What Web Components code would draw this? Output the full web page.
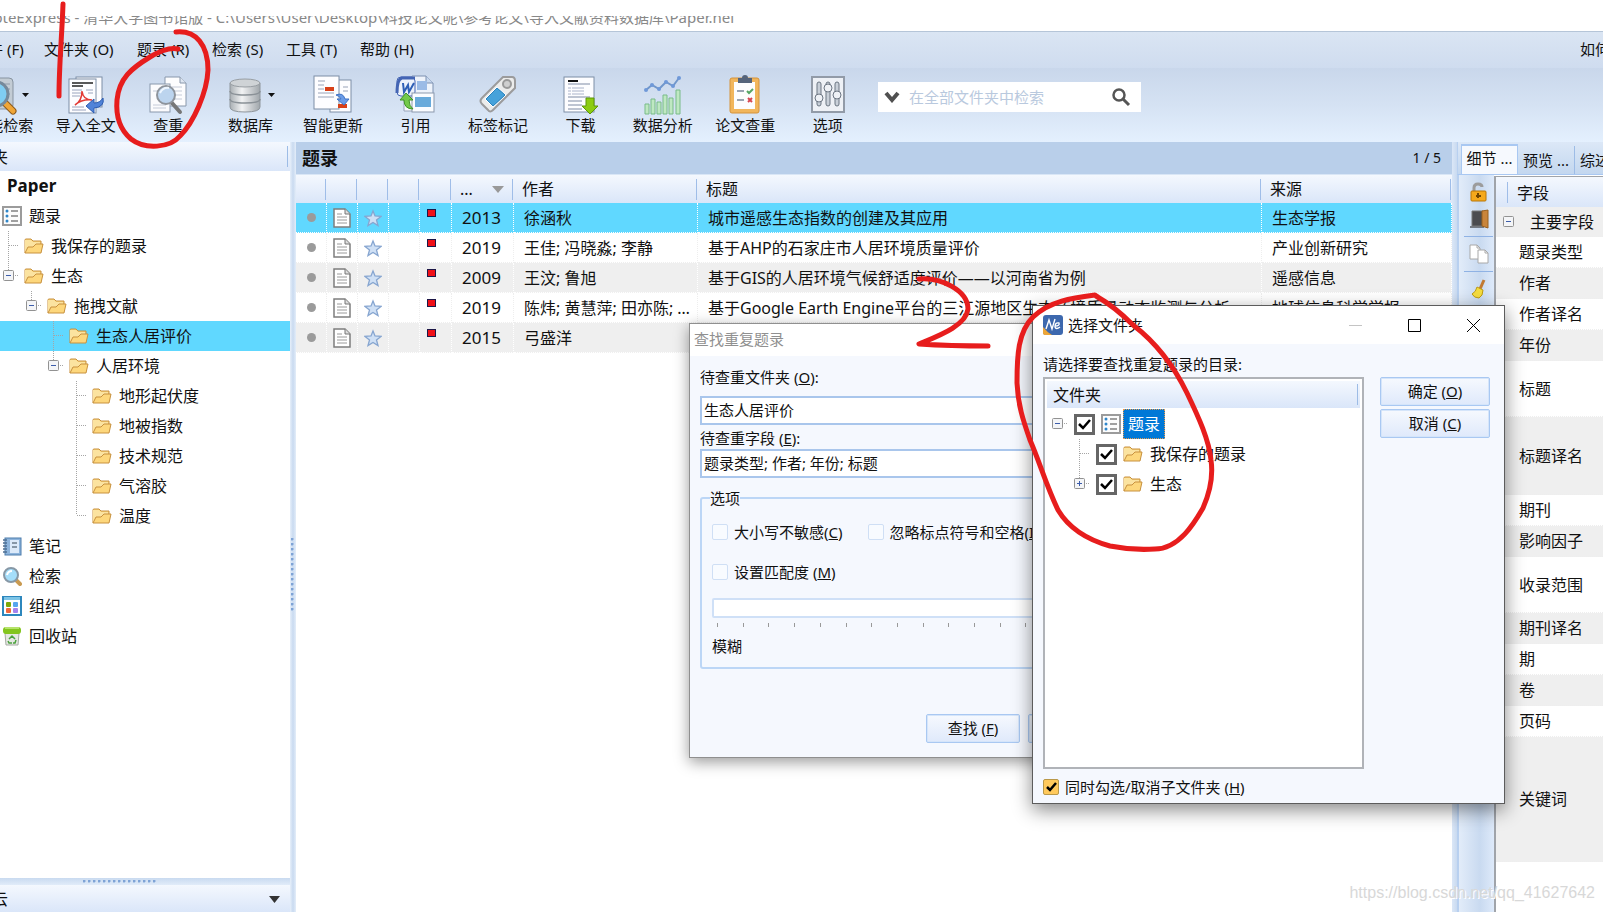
<!DOCTYPE html>
<html lang="zh-CN">
<head>
<meta charset="utf-8">
<title>NoteExpress</title>
<style>
html,body{margin:0;height:100%;overflow:hidden}
body{font-family:"Noto Sans","Noto Sans CJK SC",sans-serif;font-size:16px;line-height:20px;color:#111;background:#fff}
</style>
</head>
<body>
<ref-app>
  <title-bar slot="top">NoteExpress - 清华大学图书馆版 - C:\Users\User\Desktop\科技论文呢\参考论文\导入文献资料数据库\Paper.nel</title-bar>
  <menu-bar slot="top"></menu-bar>
  <tool-bar slot="top">
    <tool-item icon="find" menu>智能检索</tool-item>
    <tool-item icon="import">导入全文</tool-item>
    <tool-item icon="dup">查重</tool-item>
    <tool-item icon="db" menu>数据库</tool-item>
    <tool-item icon="update">智能更新</tool-item>
    <tool-item icon="cite">引用</tool-item>
    <tool-item icon="tag">标签标记</tool-item>
    <tool-item icon="download">下载</tool-item>
    <tool-item icon="chart">数据分析</tool-item>
    <tool-item icon="paper">论文查重</tool-item>
    <tool-item icon="options">选项</tool-item>
  </tool-bar>
  <folder-pane slot="side">
    <tree-row bold>Paper</tree-row>
    <tree-row icon="list">题录</tree-row>
    <tree-row level="1" line="full" icon="folder">我保存的题录</tree-row>
    <tree-row level="1" box="minus" icon="folder">生态</tree-row>
    <tree-row level="2" box="minus" icon="folder">拖拽文献</tree-row>
    <tree-row level="3" line="full" icon="folder" current>生态人居评价</tree-row>
    <tree-row level="3" box="minus" icon="folder">人居环境</tree-row>
    <tree-row level="4" line="full" icon="folder">地形起伏度</tree-row>
    <tree-row level="4" line="full" icon="folder">地被指数</tree-row>
    <tree-row level="4" line="full" icon="folder">技术规范</tree-row>
    <tree-row level="4" line="full" icon="folder">气溶胶</tree-row>
    <tree-row level="4" line="half" icon="folder">温度</tree-row>
    <tree-row icon="note">笔记</tree-row>
    <tree-row icon="lens">检索</tree-row>
    <tree-row icon="org">组织</tree-row>
    <tree-row icon="bin">回收站</tree-row>
  </folder-pane>
  <record-list slot="main"></record-list>
  <detail-pane slot="detail"></detail-pane>
</ref-app>
<duplicate-dialog></duplicate-dialog>
<folder-dialog></folder-dialog>
<ink-marks></ink-marks>
<water-mark>https://blog.csdn.net/qq_41627642</water-mark>

<script>
const page = (x,y,w,h,f='#fdfdff') => `<rect x="${x}" y="${y}" width="${w}" height="${h}" fill="${f}" stroke="#7d8ea6"/>`;
const ICONS = {
find:[40,`<rect x="14" y="3" width="22" height="31" rx="4" fill="#c3ccd4" stroke="#8793a0"/><path d="M26 9h7M28 14h5M28 19h5" stroke="#8e9aa8"/><path d="M27 27l9 9" stroke="#8c5a1c" stroke-width="7" stroke-linecap="round"/><path d="M28 28l8 8" stroke="#f0a637" stroke-width="5" stroke-linecap="round"/><circle cx="19" cy="19" r="12" fill="#7fcdf2" stroke="#75899a" stroke-width="3"/><path d="M11 18q4-8 12-7" stroke="#d8f2ff" stroke-width="3" fill="none"/>`],
import:[40,`${page(10,2,26,30)}${page(3,4,27,34)}<path d="M6 8h21M6 11h11" stroke="#222" stroke-width="1.500"/><path d="M6 15h10M6 18h9M6 21h8M20 15h7M22 18h5M6 32h12M6 35h14" stroke="#9aa4bd"/><path d="M9 30q7-4 7-14q1 9 10 9q-10-1-17 5z" fill="none" stroke="#e23b35" stroke-width="1.500"/><path d="M37 23q2 9-9 10v5l-8-7 8-7v4q6 0 9-5z" fill="#5083d8" stroke="#2c5cb0"/>`],
dup:[40,`<path d="M17 2h15l6 6v23H17z" fill="#fdfdfe" stroke="#8897ab"/><path d="M32 2v6h6" fill="#dfe7f2" stroke="#8897ab"/><path d="M20 12h14M20 16h14M20 20h14M20 24h14" stroke="#c5cbd8"/><rect x="2" y="9" width="20" height="28" fill="#fbfbfd" stroke="#8897ab"/><path d="M5 16h5M5 30h13M5 33h13" stroke="#c5cbd8"/><path d="M24 28l8 9" stroke="#777" stroke-width="4" stroke-linecap="round"/><circle cx="18" cy="20" r="9" fill="#bcd4ee" stroke="#8e949c" stroke-width="2"/><path d="M12 18q3-6 9-5" stroke="#eef6ff" stroke-width="2" fill="none"/>`],
db:[36,`<defs><linearGradient id="m"><stop offset="0" stop-color="#a9afb3"/><stop offset=".4" stop-color="#f2f3f4"/><stop offset="1" stop-color="#a0a6ab"/></linearGradient></defs><path d="M3 6v24q0 5 15 5t15-5V6z" fill="url(#m)" stroke="#8f969c"/><ellipse cx="18" cy="6" rx="15" ry="4" fill="#cfd3d6" stroke="#979da2"/><path d="M3 14q0 4 15 4t15-4M3 22q0 4 15 4t15-4" fill="none" stroke="#8a9197" stroke-width="1.500"/>`],
update:[40,`${page(17,5,21,32)}${page(1,1,25,33)}<path d="M5 6h7M5 10h6M5 14h6M5 18h16M5 22h16M30 12h5M30 16h5" stroke="#99a3b8"/><rect x="12" y="12" width="9" height="4" fill="#d84018"/><rect x="25" y="29" width="9" height="4" fill="#d84018"/><path d="M23 20q7-3 9 4h4l-5 6-7-6h4q-1-3-5-4z" fill="#6a9be8" stroke="#3f73c4"/>`],
cite:[40,`<path d="M17 1h14l7 7v18H17z" fill="#eef3fb" stroke="#7d90b0"/><path d="M31 1v7h7" fill="#c7d8ef" stroke="#7d90b0"/><rect x="22" y="6" width="10" height="9" fill="#9bbbe6"/><rect x="2" y="2" width="18" height="19" rx="4" fill="#edf2fb" stroke="#4465b4"/><path d="M20 3H7Q2 4 2 18" stroke="#4465b4" stroke-width="3" fill="none"/><path d="M8 8l1 9 4-7 1 7 5-9" fill="none" stroke="#2e5fb6" stroke-width="2"/><path d="M9 22v14h10V22z" fill="#f7f9fc" stroke="#98a5ba"/><rect x="17" y="18" width="22" height="19" fill="#fafcff" stroke="#8b99ad"/><rect x="20" y="22" width="16" height="10" fill="#68aadb"/><path d="M5 25l6-7 7 7h-4q0 6 4 9-9 0-9-9z" fill="#73c94b" stroke="#3f9425"/>`],
tag:[40,`<path d="M25 2h9q3 0 3 4v7L15 35q-3 3-5 0l-6-6q-3-3 0-6z" fill="#ececeb" stroke="#9b9b9c" stroke-width="2"/><circle cx="29" cy="9" r="4" fill="#cfcfcf" stroke="#9a9a9a" stroke-width="2"/><path d="M19 12l9 8-13 12-8-8z" fill="#46a2da" stroke="#fff"/><path d="M19 13l8 7-12 11-7-7z" fill="none" stroke="#2c83bd"/>`],
download:[40,`${page(4,2,30,35)}<path d="M8 6h10" stroke="#111" stroke-width="2"/><path d="M8 9h22M8 22h22M8 26h14M8 30h14M8 34h14" stroke="#7f8ba5"/><path d="M8 13h16M8 16h16M8 19h16" stroke="#aab3ca" stroke-dasharray="3 1 12 9"/><path d="M26 23h8v8h4l-8 8-8-8h4z" fill="#8ccc11" stroke="#5d9608"/>`],
chart:[40,`<path d="M3 15l6-5 7 4 7-7 7 4 6-8" fill="none" stroke="#7197cb" stroke-width="2"/><g fill="#6f99d8"><circle cx="3" cy="15" r="2"/><circle cx="9" cy="10" r="2"/><circle cx="16" cy="14" r="2"/><circle cx="23" cy="7" r="2"/><circle cx="30" cy="11" r="2"/><circle cx="36" cy="3" r="2"/></g><g fill="#bfe8c2" stroke="#79bb88"><path d="M2 29h4v10H2zM8 24h4v15H8zM14 27h4v12h-4zM20 20h4v19h-4zM26 23h4v16h-4zM33 15h4v24h-4z"/></g>`],
paper:[40,`<rect x="5" y="3" width="29" height="35" rx="2" fill="#f1b65c" stroke="#d5933a"/><rect x="9" y="7" width="21" height="27" fill="#fdfdfd"/><path d="M13 3h4q0-3 3-3t3 3h4v5H13z" fill="#55647a"/><path d="M12 16h7M12 25h7" stroke="#9aa4b2" stroke-width="2"/><path d="M22 16l2 2 4-4" stroke="#55a563" stroke-width="2" fill="none"/><path d="M23 23l4 4M27 23l-4 4" stroke="#d64550" stroke-width="2"/>`],
options:[40,`<rect x="4" y="2" width="32" height="35" fill="#eef1f6" stroke="#929ba8" stroke-width="2"/><g fill="#c9d0d9" stroke="#6c7683"><rect x="9" y="7" width="4" height="24" rx="2"/><rect x="18" y="7" width="4" height="24" rx="2"/><rect x="27" y="7" width="4" height="24" rx="2"/><circle cx="11" cy="23" r="4" fill="#eef1f6"/><circle cx="20" cy="13" r="4" fill="#eef1f6"/><circle cx="29" cy="20" r="4" fill="#eef1f6"/></g>`],
folder:[20,`<path d="M1 17V4q0-1 1-1h5l2 2h8v3" fill="#f8d37b" stroke="#c8913e"/><path d="M1 17V4h6l2 2h7v3h-4l-2 3H5z" fill="#fbe3a0"/><path d="M1 17l3-6h5l3-3h7l-2 9z" fill="#fdd77c" stroke="#c8913e"/>`],
list:[20,`<rect x="1" y="1" width="18" height="18" fill="#fcfcfc" stroke="#9b9b9b" stroke-width="2"/><g fill="#2f86c9"><circle cx="5" cy="5" r="1.5"/><circle cx="5" cy="10" r="1.5"/><circle cx="5" cy="15" r="1.5"/></g><path d="M9 5h7M9 10h7M9 15h7" stroke="#444"/>`],
note:[20,`<rect x="3" y="2" width="16" height="17" fill="#8db4dc" stroke="#4d7cac"/><rect x="8" y="4" width="9" height="13" fill="#dceafa"/><path d="M10 7h5M10 11h5" stroke="#345" stroke-width="1"/><path d="M1 4h4M1 7h4M1 10h4M1 13h4M1 16h4" stroke="#4d6f92" stroke-width="1.5"/>`],
lens:[20,`<path d="M14 14l4 4" stroke="#c99a51" stroke-width="4" stroke-linecap="round"/><circle cx="9" cy="9" r="7" fill="#a5defa" stroke="#8798a6" stroke-width="2"/><path d="M5 9q1-4 5-4" stroke="#fff" stroke-width="2" fill="none"/>`],
org:[20,`<rect x="1" y="1" width="18" height="18" fill="#fdfeff" stroke="#2d87bd" stroke-width="2"/><rect x="2" y="1" width="16" height="3" fill="#7dc4e6"/><rect x="4" y="6" width="5" height="5" rx="1" fill="#7ca90a"/><rect x="11" y="6" width="5" height="5" rx="1" fill="#55a5ee"/><rect x="4" y="12" width="5" height="5" rx="1" fill="#f0683c"/><rect x="11" y="12" width="5" height="5" rx="1" fill="#a583ee"/>`],
bin:[20,`<path d="M3 7h14l-1 12H4z" fill="#e5e8e3" stroke="#a6aba3"/><rect x="1" y="1" width="18" height="7" rx="3" fill="#83c51e"/><path d="M3 2h14" stroke="#b6e36a" stroke-width="2"/><path d="M7 13l3-3 3 3M6 15l1 2h3M14 14l-1 3h-2" fill="none" stroke="#4aa13c" stroke-width="1.5"/>`],
doc:[20,`<path d="M2 1h11l5 5v13H2z" fill="#fff" stroke="#7e7e7e" stroke-width="1.5"/><path d="M13 1v5h5" fill="#ddd" stroke="#777"/><path d="M5 6h5M5 9h10M5 12h10M5 15h10" stroke="#9a9a9a"/>`],
star:[18,`<path d="M9 2l2 5 6 .4-4.500 3.600 1.500 5.500L9 13.500 4 16.500 5.500 11 1 7.400 7 7z" fill="#cfe0f5" stroke="#86a5d0" stroke-width="1.300"/>`],
lock:[20,`<path d="M5 9V6q0-4 4-4t4 3" fill="none" stroke="#9c9c9c" stroke-width="3"/><rect x="2" y="9" width="15" height="10" rx="1" fill="#f5a91c" stroke="#b97607"/><path d="M9 11v5M7 14h5" stroke="#744700" stroke-width="2"/>`],
door:[20,`<path d="M1 18h14" stroke="#747b85" stroke-width="2"/><path d="M3 2h11v15H3z" fill="#4b4c50" stroke="#777"/><path d="M13 2l6-1v18l-6-2z" fill="#c9853c" stroke="#99601f"/>`],
copy:[20,`<path d="M1 1h7l3 3v11H1z" fill="#fff" stroke="#a8a8a8"/><path d="M9 6h7l3 3v10H9z" fill="#fff" stroke="#a8a8a8"/><path d="M16 6v3h3M8 1v3h3" fill="none" stroke="#a8a8a8"/>`],
broom:[20,`<path d="M15 1l-4 9" stroke="#c17a33" stroke-width="3"/><path d="M8 8l6 3q0 6-4 8-5 0-7-4 4-2 5-7z" fill="#f5dc3e" stroke="#bd9b13"/>`],
logo:[20,`<rect width="20" height="20" rx="3" fill="#3d68ae"/><path d="M0 12q4 5 9 8H2q-2 0-2-2z" fill="#eda638"/><path d="M3 14L6 5l3 9 3-10M12 11q5 0 4-3-4-1-4 4 1 3 5 0" stroke="#fff" fill="none" stroke-width="1.400"/>`]
};
const svg = (n,s) => { const [b,p]=ICONS[n]; return `<svg class="ic" width="${s||b}" height="${s||b}" viewBox="0 0 ${b} ${b}" aria-hidden="true">${p}</svg>`; };
const CONTROL = `:host,*{box-sizing:border-box}svg{display:block;flex:none}button{font:inherit;color:inherit;cursor:default}`;
const HEAD = `linear-gradient(#f4f8fe,#dae6f9)`;

function component(name, markup) {
  customElements.define(name, class extends HTMLElement {
    constructor() {
      super();
      this.attachShadow({mode:'open'}).innerHTML = `<style>${CONTROL}</style>` + (typeof markup === 'function' ? markup(this) : markup);
    }
  });
}

component('ref-app', `<style>
:host{display:flex;flex-direction:column;height:100vh;overflow:hidden}
main{flex:1;display:flex;min-height:0}
.split{width:6px;flex:none;display:flex;align-items:center;padding-top:96px;background:linear-gradient(90deg,#e6effa,#c9daf0,#e3edf9)}
.split i{width:3px;height:74px;margin:0 1px;background:radial-gradient(circle at 1px 1px,#7ea3d6 1px,#fff0 2px) 0 0/5px 5px}
.main{flex:1;min-width:0;display:flex}
</style><slot name="top"></slot><main><slot name="side"></slot><div class="split"><i></i></div><div class="main"><slot name="main"></slot></div><slot name="detail"></slot></main>`);

component('title-bar', `<style>
:host{display:block;padding-top:16px;height:31px;flex:none;background:#fff;color:#888;font-size:15px}
div{height:15px;overflow:hidden;white-space:nowrap;display:flex;align-items:flex-end}
span{display:block;margin-left:-18px;line-height:24px;margin-bottom:2px}
</style><div><span><slot></slot></span></div>`);

component('menu-bar', `<style>
:host{display:block;flex:none;background:linear-gradient(#dae5f3,#cfdcef);border-top:1px solid #b5c5d8}
nav{display:flex;justify-content:space-between;height:36px;padding-bottom:2px;align-items:center;overflow:hidden;font-size:15px}
div{display:grid;grid-template-columns:71px 93px 75px 74px 74px 74px;margin-left:-27px}
button{border:0;background:none;padding:0;text-align:left;white-space:nowrap}
nav>button{width:23px;flex:none}
</style><nav><div><button>文件 (F)</button><button>文件夹 (O)</button><button>题录 (R)</button><button>检索 (S)</button><button>工具 (T)</button><button>帮助 (H)</button></div><button>如何</button></nav>`);

component('tool-bar', `<style>
:host{display:flex;align-items:flex-start;height:74px;flex:none;padding-top:7px;background:linear-gradient(#c9d7eb,#d5e2f3 50%,#e4f0fe)}
.items{display:grid;grid-template-columns:repeat(11,1fr);width:907px;flex:none;margin-left:-38px}
form{margin:7px 0 0 9px;width:263px;height:30px;background:#fff;display:flex;align-items:center;gap:9px;padding:0 10px 0 6px}
input{flex:1;min-width:0;border:0;outline:0;padding:0;font:inherit;font-size:15px;background:none}
input::placeholder{color:#b9c9de;opacity:1}
form button{border:0;background:none;padding:0}
</style><div class="items"><slot></slot></div>
<form><button type="button" aria-label="检索范围"><svg width="16" height="12" viewBox="0 0 16 12"><path d="M2 2l6 7 6-7" fill="none" stroke="#505050" stroke-width="4"/></svg></button>
<input type="text" aria-label="检索" placeholder="在全部文件夹中检索"><button type="button" aria-label="开始检索"><svg width="20" height="20" viewBox="0 0 20 20"><circle cx="8" cy="8" r="5.500" fill="none" stroke="#555" stroke-width="2.500"/><path d="M12 12l6 6" stroke="#555" stroke-width="3"/></svg></button></form>`);

component('tool-item', el => `<style>
:host{display:block}
button{display:flex;flex-direction:column;align-items:center;width:100%;border:0;background:none;padding:0;font-size:15px;white-space:nowrap}
.pic{display:flex;align-items:center;gap:5px;height:40px}
</style><button><span class="pic">${svg(el.getAttribute('icon'))}${el.hasAttribute('menu')?'<svg width="7" height="4" viewBox="0 0 7 4"><path d="M0 0h7L3.500 4z" fill="#111"/></svg>':''}</span><slot></slot></button>`);

const PAD=[2,2,25,47,70];
const treeBox = kind => `<rect x="1.500" y="9.500" width="10" height="10" rx="1" fill="#f4f5f7" stroke="#929292"/><path d="M4 14.500h5${kind==='plus'?'M6.500 12v5':''}" stroke="#3c5dab"/>`;
component('tree-row', el => {
  const level=+(el.getAttribute('level')||0), line=el.getAttribute('line'), box=el.getAttribute('box'), icon=el.getAttribute('icon');
  const root=el.hasAttribute('root-box');
  const guide = (level||root) ? `<svg width="22" height="30" viewBox="0 0 22 30"><g stroke="#a5a5a5" stroke-dasharray="1 1">${root?'':`<path d="M6.500 0V${line==='full'?30:box?9:14}"/>`}<path d="M${box?13:7} 14.500h${box?4:10}"/></g>${box?treeBox(box):''}</svg>` : '';
  const check = el.hasAttribute('check') ? `<input type="checkbox" checked aria-label="${el.textContent}">` : '';
  return `<style>
:host{display:flex;align-items:center;height:30px;padding-left:${PAD[level]}px;white-space:nowrap}
:host([current]){background:#60d8ff}
:host([bold]){font-weight:700;font-size:17px}
:host([check]){padding-left:${level?28:6}px}
span{padding:0 5px;margin-left:${icon?2:0}px;line-height:30px}
:host([chosen]) span{background:#0078d7;color:#fff;outline:1px dotted #e59b50;outline-offset:-1px}
input{appearance:none;width:21px;height:21px;flex:none;margin:0 6px 0 1px;border:3px solid #666;background:#fff url("data:image/svg+xml,%3Csvg xmlns='http://www.w3.org/2000/svg' viewBox='0 0 15 15'%3E%3Cpath d='M2 7l4 4 7-8' fill='none' stroke='%23000' stroke-width='2.500'/%3E%3C/svg%3E")}
</style>${guide}${check}${icon?svg(icon):''}<span><slot></slot></span>`;
});

component('folder-pane', `<style>
:host{display:flex;flex-direction:column;flex:none;width:290px;overflow:hidden}
header{display:flex;justify-content:space-between;align-items:center;height:29px;flex:none;background:${HEAD}}
header b,footer b{font-weight:400;margin-left:-40px}
header i{width:1px;height:21px;margin-right:2px;background:#9dbce6}
section{flex:1;min-height:0;overflow:hidden}
.grip{height:7px;flex:none;display:flex;background:linear-gradient(#c9daf0,#e1ecf9)}
.grip i{width:74px;height:4px;margin:2px 0 0 83px;background:radial-gradient(circle at 1px 1px,#7ea3d6 1px,#fff0 2px) 0 0/5px 5px}
footer{display:flex;justify-content:space-between;align-items:center;height:27px;flex:none;padding:1px 10px 0 0;background:${HEAD}}
</style><header><b>文件夹</b><i></i></header><section><slot></slot></section><div class="grip"><i></i></div>
<footer><b>标签云</b><svg width="11" height="7" viewBox="0 0 11 7"><path d="M0 0h11L5.500 7z" fill="#333"/></svg></footer>`);

const RECORDS=[['2013','徐涵秋','城市遥感生态指数的创建及其应用','生态学报'],['2019','王佳; 冯晓淼; 李静','基于AHP的石家庄市人居环境质量评价','产业创新研究'],['2009','王汶; 鲁旭','基于GIS的人居环境气候舒适度评价——以河南省为例','遥感信息'],['2019','陈炜; 黄慧萍; 田亦陈; 程瑜','基于Google Earth Engine平台的三江源地区生态环境质量动态监测与分析','地球信息科学学报'],['2015','弓盛洋','','']];
component('record-list', `<style>
:host{display:block;flex:1;min-width:0;background:#fff}
header{display:flex;justify-content:space-between;align-items:center;height:33px;padding:0 11px 0 6px;background:#b9cfea;border-bottom:1px solid #d9e6f6}
h2{margin:0;font-size:18px;line-height:26px}
header span{font-size:14px}
table{width:100%;table-layout:fixed;border-collapse:separate;border-spacing:0}
th{height:28px;padding:0 0 0 8px;text-align:left;font-weight:400;line-height:20px;background:linear-gradient(#9fbde8,#9fbde8) right 1px center/1px 21px no-repeat,${HEAD}}
td{height:30px;padding:0 0 0 10px;border:0 dotted #fff;border-width:0 1px 1px 0;white-space:nowrap;overflow:hidden;text-overflow:ellipsis}
.sort{display:flex;justify-content:space-between;align-items:center;padding-right:10px}
tr:nth-child(odd) td{background:#efefef}
tbody tr:first-child td{background:#60d8ff}
tr:nth-child(even) td{border-color:#eee}
.i{padding:0}.i svg{margin:auto}
.dot{width:9px;height:9px;border-radius:50%;background:#9b9b9b;margin:auto}
.flag{width:9px;height:8px;background:#f01018;border:1px solid #1d1747;margin:0 0 10px 7px}
.y{font-size:17px}
</style><header><h2>题录</h2><span>1 / 5</span></header>
<table><colgroup><col style="width:31px"><col style="width:31px"><col style="width:31px"><col style="width:31px"><col style="width:32px"><col style="width:62px"><col style="width:184px"><col><col style="width:190px"></colgroup>
<thead><tr><th></th><th></th><th></th><th></th><th></th><th><div class="sort">...<svg width="12" height="7" viewBox="0 0 12 7"><path d="M0 0h12L6 7z" fill="#999"/></svg></div></th><th>作者</th><th>标题</th><th>来源</th></tr></thead>
<tbody>${RECORDS.map(r=>`<tr><td class="i"><div class="dot"></div></td><td class="i">${svg('doc')}</td><td class="i">${svg('star')}</td><td></td><td class="i"><div class="flag"></div></td><td class="y">${r[0]}</td><td>${r[1]}</td><td>${r[2]}</td><td>${r[3]}</td></tr>`).join('')}</tbody></table>`);

const FIELDS=[['主要字段',30],['题录类型',31],['作者',31],['作者译名',31],['年份',31],['标题',56],['标题译名',78],['期刊',31],['影响因子',31],['收录范围',56],['期刊译名',31],['期',31],['卷',31],['页码',31],['关键词',125]];
component('detail-pane', `<style>
:host{display:flex;flex-direction:column;flex:none;width:151px;padding-left:5px;overflow:hidden;background:linear-gradient(90deg,#dbe7f7,#c9daf0 5px,#fff 5px)}
.tabs{display:flex;align-items:flex-end;height:33px;flex:none;padding-left:3px;overflow:hidden;background:linear-gradient(#dce8f7,#c3d7ef);border-left:1px solid #b8d0f0;border-bottom:1px solid #a9c8f2}
.tabs button{border:0;background:none;padding:0 5px;height:28px;font-size:15px;white-space:nowrap;flex:none}
.tabs button.on{height:30px;padding:0 4px 5px;width:57px;border:1px solid #a9c8f2;border-top-width:2px;border-bottom:0;background:#f6f9fe}
.tabs button+button{border-right:1px solid #9dbce6}
.body{flex:1;display:flex;min-height:0}
.strip{width:37px;flex:none;display:flex;flex-direction:column;align-items:center;gap:7px;padding:7px 0 0 4px;border-left:2px solid #b8d0f0;background:linear-gradient(90deg,#e2ecf9,#c9daf0 60%,#deeafa)}
.strip button{border:0;padding:0;background:none}
hr{width:29px;height:1px;border:0;margin:0;background:#8fb2e4;flex:none}
.grid{flex:1;min-width:0;overflow:hidden;margin-top:1px;border:1px solid #a0a4aa;border-width:1px 0 0 2px;background:#fff}
table{width:100%;border-spacing:0;white-space:nowrap}
th{height:30px;text-align:left;font-weight:400;padding:1px 0 0 21px;background:linear-gradient(#9fbde8,#9fbde8) 11px center/1px 21px no-repeat,${HEAD}}
td{padding:0 0 0 23px;border-bottom:1px dotted #eee}
tbody tr:nth-child(odd) td{background:#efefef}
.group{display:flex;align-items:center;gap:15px;margin-left:-16px}
</style><div class="tabs"><button class="on">细节 ...</button><button>预览 ...</button><button>综述</button></div>
<div class="body"><div class="strip"><button aria-label="锁定">${svg('lock')}</button><button aria-label="退出">${svg('door')}</button><hr><button aria-label="复制">${svg('copy')}</button><hr><button aria-label="清理">${svg('broom')}</button></div>
<div class="grid"><table><thead><tr><th>字段</th></tr></thead><tbody>${FIELDS.map(([t,h],i)=>`<tr><td style="height:${h}px">${i?t:`<div class="group"><svg width="12" height="12" viewBox="1 9 12 12">${treeBox('minus')}</svg>${t}</div>`}</td></tr>`).join('')}</tbody></table></div></div>`);

const DIALOG = `
.btn{height:29px;padding:0 0 2px;font-size:15px;border:1px solid #a9c8f2;border-radius:2px;background:linear-gradient(#f6f9fe,#dfe9fb);white-space:nowrap;box-shadow:inset 0 0 0 1px #d5e5fa}
label{white-space:nowrap}`;
component('duplicate-dialog', `<style>${DIALOG}
:host{position:absolute;left:689px;top:323px;width:494px;background:#f5f8fe;border:1px solid #8f8f8f;box-shadow:0 4px 14px #0006;font-size:15px}
header{height:32px;padding-left:4px;line-height:30px;background:#fff;color:#909090}
section{padding:10px 10px 14px;display:flex;flex-direction:column}
section>label{line-height:22px}
.text{width:100%;height:29px;padding:0 2px 2px;border:2px solid #a9c6ec;border-right-width:1px;font:inherit;color:inherit;background:#fff}
#folders{margin:8px 0 2px}
fieldset{margin:9px 0 45px;padding:3px 10px 10px 10px;border:2px solid #bcd6f6;border-radius:3px;min-width:0;height:182px}
legend{padding:0;margin-left:-2px;line-height:22px}
.row{display:flex;gap:25px;height:40px;align-items:center}
.row label{display:flex;align-items:center;gap:6px}
.row input{appearance:none;width:16px;height:16px;margin:0;border:1px solid #cfdff5;border-radius:2px;background:#f8fbff}
input[type=range]{appearance:none;display:block;width:100%;height:20px;margin:6px 0 5px;border:2px solid #cfe0f7;border-radius:2px;background:#fff}
input[type=range]::-webkit-slider-thumb{appearance:none;width:0;height:0}
.ticks{display:flex;justify-content:space-between;padding:0 5px}
.ticks i{width:1px;height:4px;background:#999}
.ticks+span{display:block;margin-top:9px}
footer{display:flex;gap:8px;padding-left:226px}
footer .btn{width:94px;flex:none}
</style><header>查找重复题录</header><section><label for="folders">待查重文件夹 (<u>O</u>):</label><input class="text" id="folders" value="生态人居评价"><label for="fields">待查重字段 (<u>E</u>):</label><input class="text" id="fields" value="题录类型; 作者; 年份; 标题">
<fieldset><legend>选项</legend><div class="row"><label><input type="checkbox"><span>大小写不敏感(<u>C</u>)</span></label><label><input type="checkbox"><span>忽略标点符号和空格(<u>I</u>)</span></label></div>
<div class="row"><label><input type="checkbox"><span>设置匹配度 (<u>M</u>)</span></label></div>
<input type="range" aria-label="匹配度"><div class="ticks">${'<i></i>'.repeat(18)}</div><span>模糊</span></fieldset>
<footer><button class="btn">查找 (<u>F</u>)</button><button class="btn" aria-label="取消"></button></footer></section>`);

component('folder-dialog', `<style>${DIALOG}
:host{position:absolute;left:1032px;top:305px;width:473px;height:499px;background:#f5f8fe;border:1px solid #5c5c5c;box-shadow:0 6px 18px #0007;font-size:15px}
header{display:flex;align-items:center;height:38px;padding:0 24px 0 10px;background:#fff;gap:5px}
header b{font-weight:400;flex:1}
header button{border:0;background:none;padding:0}
.max,.close{margin-left:41px}
section{padding:10px 14px 0 10px}
.cols{display:grid;grid-template-columns:1fr 110px;gap:16px;margin-top:3px}
.tree{height:392px;border:2px solid #b0b3b8;background:#fff;font-size:16px}
.tree h3{margin:2px 2px 1px;padding:0 2px 0 6px;font:inherit;height:27px;display:flex;justify-content:space-between;align-items:center;background:${HEAD}}
.tree h3 i{width:1px;height:21px;background:#9dbce6}
.side{display:flex;flex-direction:column;gap:3px}
.below{display:flex;align-items:center;gap:6px;margin-top:8px}
.below input{appearance:none;width:16px;height:16px;margin:0;border:1px solid #b99849;border-radius:2px;background:#ffc95c url("data:image/svg+xml,%3Csvg xmlns='http://www.w3.org/2000/svg' viewBox='0 0 14 14'%3E%3Cpath d='M3 7l3 3 6-7' fill='none' stroke='%23000' stroke-width='2.500'/%3E%3C/svg%3E")}
</style><header>${svg('logo')}<b>选择文件夹</b>
<button aria-label="最小化"><svg width="13" height="13" viewBox="0 0 13 13"><path d="M0 6.500h13" stroke="#c4c4c4"/></svg></button><button class="max" aria-label="最大化"><svg width="13" height="13" viewBox="0 0 13 13"><path d="M.5.5h12v12H.5z" fill="none" stroke="#000"/></svg></button><button class="close" aria-label="关闭"><svg width="13" height="13" viewBox="0 0 13 13"><path d="M0 0l13 13M13 0L0 13" stroke="#000"/></svg></button></header>
<section><div>请选择要查找重复题录的目录:</div><div class="cols"><div class="tree"><h3>文件夹<i></i></h3>
<tree-row check root-box box="minus" icon="list" chosen>题录</tree-row><tree-row check level="1" line="full" icon="folder">我保存的题录</tree-row><tree-row check level="1" box="plus" icon="folder">生态</tree-row></div>
<div class="side"><button class="btn">确定 (<u>O</u>)</button><button class="btn">取消 (<u>C</u>)</button></div></div>
<label class="below"><input type="checkbox" checked><span>同时勾选/取消子文件夹 (<u>H</u>)</span></label></section>`);

component('ink-marks', `<style>:host{position:absolute;left:0;top:0;pointer-events:none}</style>
<svg width="1240" height="570" viewBox="0 0 1240 570"><g fill="none" stroke="#e71d1d" stroke-width="5" stroke-linecap="round" stroke-linejoin="round">
<path d="M63 4C62 35 59 65 59 96"/>
<path d="M176 32C196 30 208 45 208 70C207 92 194 122 180 136C170 148 145 150 131 139C118 128 116 112 117 100C119 78 132 68 150 57C160 51 169 47 178 49"/>
<path d="M919 279C940 277 968 290 968 309C966 326 938 336 919 344Q950 346 988 346"/>
<path d="M1098 297L1095 295C1072 298 1050 301 1033 317C1018 332 1017 355 1017 383C1018 405 1023 420 1030 440C1040 463 1046 485 1058 510C1070 530 1088 540 1110 546C1125 549 1140 550 1155 549C1180 549 1196 520 1203 508C1211 490 1213 474 1211 460C1209 440 1199 418 1187 393C1170 358 1150 338 1133 325C1120 312 1110 304 1096 296"/></g></svg>`);
component('water-mark', `<style>:host{position:absolute;right:8px;bottom:9px;font:16px/20px "Liberation Sans",sans-serif;color:#d8d8d8;text-shadow:1px 1px 0 #fff;pointer-events:none}</style><slot></slot>`);
</script>
</body>
</html>
